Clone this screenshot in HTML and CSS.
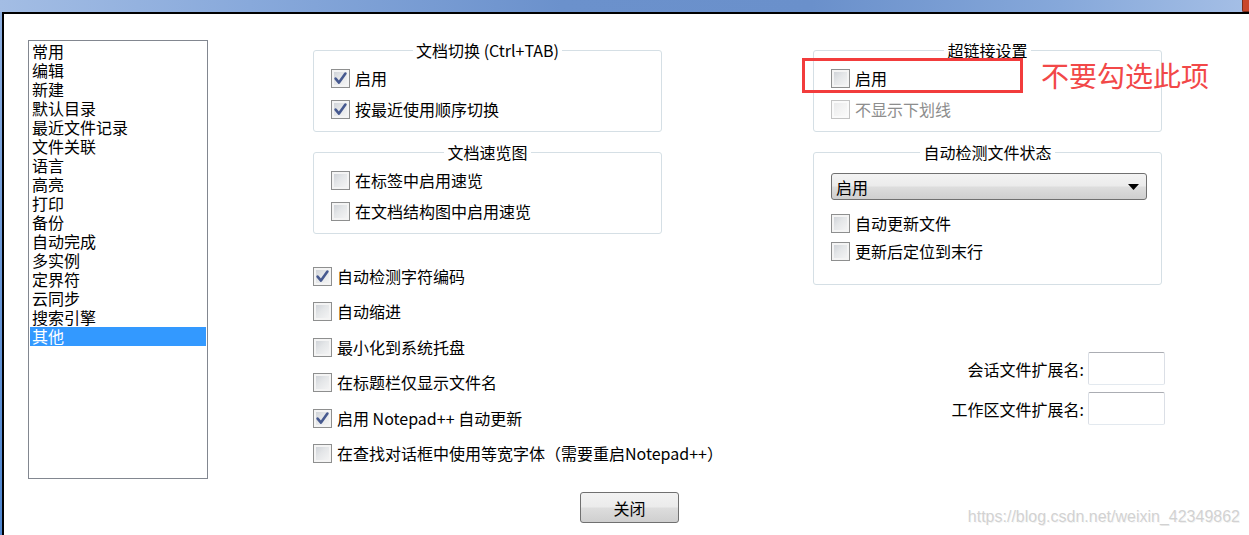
FILE: index.html
```html
<!DOCTYPE html>
<html lang="zh-CN">
<head>
<meta charset="utf-8">
<title>首选项 - 其他</title>
<link rel="stylesheet" href="styles.css">
</head>
<body>
<div class="titlebar"><span class="close-edge"></span></div>
<div class="window">
  <div class="main">
    <ul class="catlist">
      <li>常用</li>
      <li>编辑</li>
      <li>新建</li>
      <li>默认目录</li>
      <li>最近文件记录</li>
      <li>文件关联</li>
      <li>语言</li>
      <li>高亮</li>
      <li>打印</li>
      <li>备份</li>
      <li>自动完成</li>
      <li>多实例</li>
      <li>定界符</li>
      <li>云同步</li>
      <li>搜索引擎</li>
      <li class="selected">其他</li>
    </ul>

    <div class="col col-mid">
      <fieldset class="group">
        <legend>文档切换 (Ctrl+TAB)</legend>
        <div class="rows">
          <label class="cb-row"><span class="cb"><svg viewBox="0 0 17 17" width="17" height="17"><path d="M3.6 8.6 L7 12.6 L13.4 3.6" class="tick"/></svg></span><span class="lbl">启用</span></label>
          <label class="cb-row"><span class="cb"><svg viewBox="0 0 17 17" width="17" height="17"><path d="M3.6 8.6 L7 12.6 L13.4 3.6" class="tick"/></svg></span><span class="lbl">按最近使用顺序切换</span></label>
        </div>
      </fieldset>
      <fieldset class="group group-gap">
        <legend>文档速览图</legend>
        <div class="rows">
          <label class="cb-row"><span class="cb"></span><span class="lbl">在标签中启用速览</span></label>
          <label class="cb-row"><span class="cb"></span><span class="lbl">在文档结构图中启用速览</span></label>
        </div>
      </fieldset>
      <div class="opts">
        <label class="cb-row"><span class="cb"><svg viewBox="0 0 17 17" width="17" height="17"><path d="M3.6 8.6 L7 12.6 L13.4 3.6" class="tick"/></svg></span><span class="lbl">自动检测字符编码</span></label>
        <label class="cb-row"><span class="cb"></span><span class="lbl">自动缩进</span></label>
        <label class="cb-row"><span class="cb"></span><span class="lbl">最小化到系统托盘</span></label>
        <label class="cb-row"><span class="cb"></span><span class="lbl">在标题栏仅显示文件名</span></label>
        <label class="cb-row"><span class="cb"><svg viewBox="0 0 17 17" width="17" height="17"><path d="M3.6 8.6 L7 12.6 L13.4 3.6" class="tick"/></svg></span><span class="lbl">启用 Notepad++ 自动更新</span></label>
        <label class="cb-row"><span class="cb"></span><span class="lbl">在查找对话框中使用等宽字体（需要重启Notepad++）</span></label>
      </div>
    </div>

    <div class="col col-right">
      <fieldset class="group">
        <legend>超链接设置</legend>
        <div class="rows">
          <label class="cb-row"><span class="cb"></span><span class="lbl">启用</span></label>
          <label class="cb-row disabled"><span class="cb"></span><span class="lbl">不显示下划线</span></label>
        </div>
      </fieldset>
      <div class="annot-box"></div>
      <div class="annot-text">不要勾选此项</div>
      <fieldset class="group group-gap group-detect">
        <legend>自动检测文件状态</legend>
        <div class="select">
          <span>启用</span>
          <svg class="arrow" viewBox="0 0 11 6" width="11" height="6"><path d="M0 0 H11 L5.5 6 Z"/></svg>
        </div>
        <div class="rows rows-tight">
          <label class="cb-row"><span class="cb"></span><span class="lbl">自动更新文件</span></label>
          <label class="cb-row"><span class="cb"></span><span class="lbl">更新后定位到末行</span></label>
        </div>
      </fieldset>
      <div class="ext-fields">
        <div class="ext-row"><span>会话文件扩展名:</span><span class="textbox"></span></div>
        <div class="ext-row"><span>工作区文件扩展名:</span><span class="textbox"></span></div>
      </div>
    </div>
  </div>
  <div class="footer"><button class="btn">关闭</button></div>
  <div class="watermark">https://blog.csdn.net/weixin_42349862</div>
</div>
</body>
</html>
```

FILE: styles.css
```css
html, body {
  margin: 0;
  padding: 0;
}
body {
  width: 1249px;
  height: 535px;
  overflow: hidden;
  background: linear-gradient(180deg, #8fb0e0 0%, #6a97d6 50%, #4f86cf 100%);
  font-family: "Noto Sans CJK SC", "Noto Sans", sans-serif;
  font-size: 16px;
  color: #000;
}
.titlebar {
  height: 12px;
  display: flex;
  justify-content: flex-end;
  background: linear-gradient(90deg, #a3bde4 0%, #88a9db 20%, #6b91cc 45%, #6a90cb 65%, #86a8da 85%, #a5bfe6 100%);
}
.close-edge {
  width: 6px;
  height: 11px;
  background: #c9472b;
  border-left: 1px solid #7a2e1c;
  border-bottom: 1px solid #7a2e1c;
  border-bottom-left-radius: 2px;
}
.window {
  position: relative;
  margin-left: 2px;
  height: 523px;
  box-sizing: border-box;
  border-top: 2px solid #000;
  border-left: 2px solid #000;
  background: #fff;
}
.main {
  display: flex;
  align-items: flex-start;
  padding: 26px 0 0 24px;
  height: 439px;
}
.catlist {
  list-style: none;
  margin: 0;
  padding: 1px;
  width: 180px;
  height: 439px;
  box-sizing: border-box;
  border: 1px solid #828790;
  flex: none;
}
.catlist li {
  height: 19px;
  line-height: 18px;
  padding-left: 2px;
  white-space: nowrap;
}
.catlist li.selected {
  background: #3399ff;
  color: #fff;
}
.col {
  flex: none;
  display: flex;
  flex-direction: column;
}
.col-mid {
  margin-left: 105px;
  width: 349px;
}
.col-right {
  position: relative;
  margin-left: 151px;
  width: 352px;
}
.group {
  margin: 2px 0 0 0;
  width: 349px;
  box-sizing: border-box;
  padding: 11px 17px 12px 17px;
  border: 1px solid #d5dfe5;
  border-radius: 3px;
  min-inline-size: 0;
}
.group-gap {
  margin-top: 12px;
}
.group legend {
  margin: 0 auto;
  padding: 0 3px;
  line-height: 16px;
  font-size: 16px;
  white-space: nowrap;
}
.rows {
  display: flex;
  flex-direction: column;
  gap: 12px;
}
.rows-tight {
  margin-top: 14px;
  gap: 9px;
}
.group-detect {
  padding-top: 13px;
  padding-bottom: 23px;
}
.cb-row {
  display: flex;
  align-items: center;
  gap: 5px;
  height: 19px;
  white-space: nowrap;
}
.lbl {
  line-height: 18px;
  height: 19px;
}
.cb {
  flex: none;
  width: 19px;
  height: 19px;
  box-sizing: border-box;
  border: 1px solid #8e8f8f;
  background: linear-gradient(135deg, #c9cdd3 0%, #e4e6e8 45%, #f7f7f7 100%);
  box-shadow: inset 0 0 0 2px #f4f4f4;
  display: flex;
}
.tick {
  fill: none;
  stroke: #46598f;
  stroke-width: 2.6;
  stroke-linecap: round;
  stroke-linejoin: round;
}
.cb-row.disabled {
  color: #8d8d8d;
}
.cb-row.disabled .cb {
  border-color: #c4c4c4;
  background: linear-gradient(135deg, #e6e7e9 0%, #f3f3f3 50%, #fcfcfc 100%);
  box-shadow: inset 0 0 0 2px #fafafa;
}
.opts {
  margin-top: 33px;
  display: flex;
  flex-direction: column;
  gap: 16.4px;
}
.select {
  width: 316px;
  height: 27px;
  box-sizing: border-box;
  border: 1px solid #707070;
  border-radius: 3px;
  background: linear-gradient(180deg, #f3f3f3 0%, #ebebeb 48%, #dddddd 52%, #cfcfcf 100%);
  display: flex;
  align-items: center;
  justify-content: space-between;
  padding: 0 7px 0 4px;
  line-height: 24px;
}
.arrow path {
  fill: #000;
}
.ext-fields {
  margin-top: 67px;
  display: flex;
  flex-direction: column;
  gap: 7px;
}
.ext-row {
  display: flex;
  justify-content: flex-end;
  align-items: center;
  gap: 4px;
  line-height: 18px;
}
.textbox {
  width: 77px;
  height: 33px;
  box-sizing: border-box;
  border: 1px solid #dbdfe6;
  border-top-color: #abadb3;
  border-bottom-color: #e3e9ef;
  border-radius: 2px;
  background: #fff;
}
.annot-box {
  position: absolute;
  left: -11px;
  top: 18px;
  width: 221px;
  height: 35px;
  box-sizing: border-box;
  border: 3px solid #f23c3c;
}
.annot-text {
  position: absolute;
  left: 228px;
  top: 21px;
  font-size: 28px;
  line-height: 28px;
  color: #f24848;
  white-space: nowrap;
}
.footer {
  display: flex;
  margin-top: 13px;
  padding-left: 576px;
}
.btn {
  width: 99px;
  height: 31px;
  box-sizing: border-box;
  border: 1px solid #707070;
  border-radius: 3px;
  background: linear-gradient(180deg, #f2f2f2 0%, #ebebeb 48%, #dddddd 52%, #cfcfcf 100%);
  font-family: "Noto Sans CJK SC", "Noto Sans", sans-serif;
  font-size: 16px;
  line-height: 28px;
  padding: 0;
  color: #000;
}
.watermark {
  position: absolute;
  right: 9px;
  bottom: 9px;
  font-family: "Liberation Sans", Arial, sans-serif;
  font-size: 16px;
  line-height: 18px;
  color: #d2d2d2;
  text-shadow: 1px 1px 0 rgba(0, 0, 0, 0.06);
  white-space: nowrap;
}
```
